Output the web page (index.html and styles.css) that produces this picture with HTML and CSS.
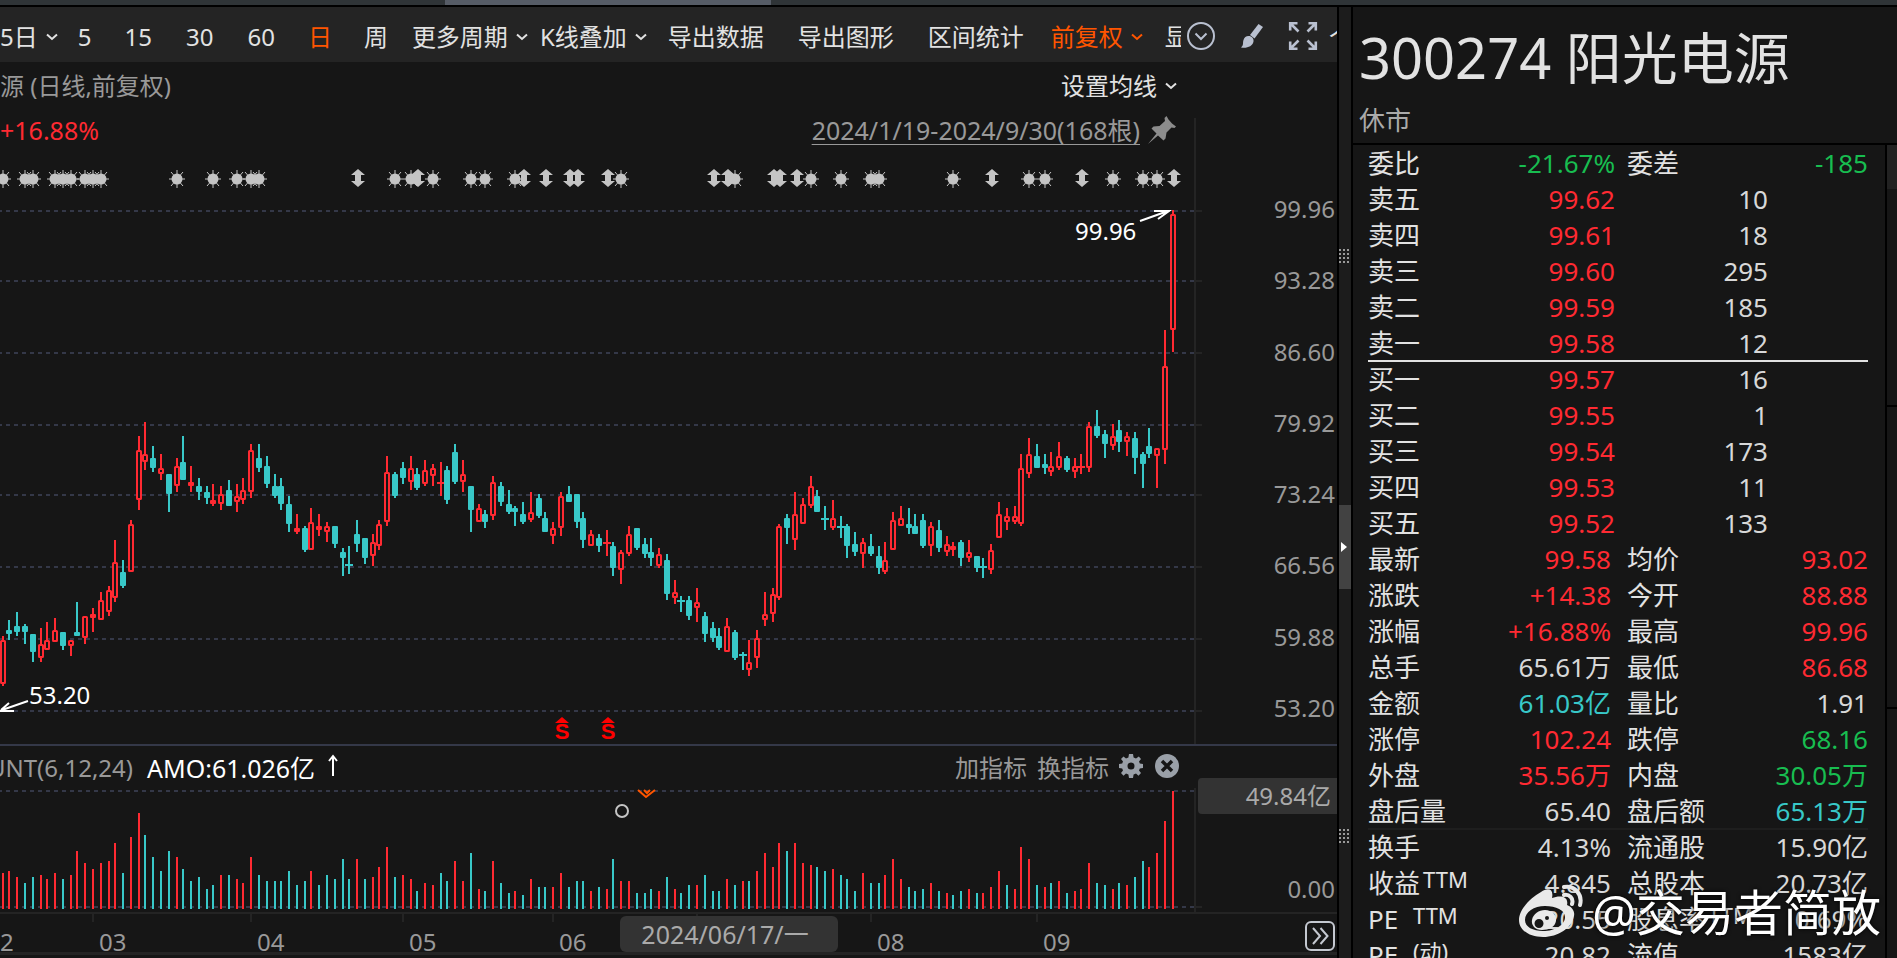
FILE: index.html
```html
<!DOCTYPE html>
<html lang="zh-CN">
<head>
<meta charset="utf-8">
<title>300274 阳光电源</title>
<link rel="stylesheet" href="styles.css">
</head>
<body>
<svg class="defs" aria-hidden="true">
  <symbol id="chev" viewBox="0 0 12 8"><path d="M1 1.5 6 6 11 1.5" fill="none" stroke="currentColor" stroke-width="2"/></symbol>
  <symbol id="grip" viewBox="0 0 10 16"><path d="M1 0V16M5 0V16M9 0V16" fill="none" stroke="#9a9a9a" stroke-width="2" stroke-dasharray="2 2"/></symbol>
</svg>
<div class="app">
  <div class="topstrip"><div class="thumb"></div></div>
  <div class="main">
    <section class="pane">
      <nav class="toolbar">
        <button class="tb first">5日<svg class="chev"><use href="#chev"/></svg></button>
        <button class="tb">5</button>
        <button class="tb wide">15</button>
        <button class="tb wide">30</button>
        <button class="tb wide">60</button>
        <button class="tb on">日</button>
        <button class="tb">周</button>
        <button class="tb drop">更多周期<svg class="chev"><use href="#chev"/></svg></button>
        <button class="tb drop">K线叠加<svg class="chev"><use href="#chev"/></svg></button>
        <button class="tb wide">导出数据</button>
        <button class="tb wide">导出图形</button>
        <button class="tb wide">区间统计</button>
        <button class="tb drop on">前复权<svg class="chev"><use href="#chev"/></svg></button>
        <button class="tb cut">显</button>
        <div class="tools">
          <button class="ico" aria-label="更多"><svg width="30" height="30" viewBox="0 0 30 30"><circle cx="15" cy="15" r="13" fill="none" stroke="#b9c0d0" stroke-width="2"/><path d="M9.500 12.500 15 18 20.500 12.500" fill="none" stroke="#b9c0d0" stroke-width="2"/></svg></button>
          <button class="ico" aria-label="画笔"><svg width="24" height="26" viewBox="0 0 24 26"><path d="M18.500 1 23 4 14.500 15.500 10 12Z" fill="#b9c0d0"/><path d="M8.500 13C12 13 14 15.500 13.500 18.500 12.500 23.500 7 25.500 1 24.500 4 22 2.500 20 3.500 17 4.300 14.500 6 13 8.500 13Z" fill="#b9c0d0"/></svg></button>
          <button class="ico" aria-label="全屏"><svg width="30" height="30" viewBox="0 0 30 30"><path d="M10.500 10.500 3 3M2.200 9.500V2.200H9.500M19.500 10.500 27 3M27.800 9.500V2.200H20.500M10.500 19.500 3 27M2.200 20.500V27.800H9.500M19.500 19.500 27 27M27.800 20.500V27.800H20.500" fill="none" stroke="#b9c0d0" stroke-width="2.600"/></svg></button>
        </div>
        <button class="tb tail">个</button>
      </nav>
      <div class="titlebar">
        <span class="muted">源 (日线,前复权)</span>
        <button class="avg">设置均线<svg class="chev"><use href="#chev"/></svg></button>
      </div>
      <div class="info">
        <span class="up">+16.88%</span>
        <a class="range" href="#">2024/1/19-2024/9/30(168根)</a>
        <svg class="pin" width="28" height="28" viewBox="0 0 28 28"><path d="M18.500 0 20.500 3.500 24 7.500 28 10.500 26.500 12 23.500 11.500 18.500 16.500 17.500 22.500 15.500 24.500 10 19.500 0 28 8.500 17.500 3.500 12.500 5.500 10.500 11.500 10 17 5 16.500 2Z" fill="#8c8c8c"/></svg>
        <div class="axis-gap"></div>
      </div>
      <div class="plot">
        <svg id="price" class="canvas" viewBox="0 142 1194 602" preserveAspectRatio="xMaxYMin slice"></svg>
        <div class="axis price-axis">
          <span>99.96</span><span>93.28</span><span>86.60</span><span>79.92</span><span>73.24</span><span>66.56</span><span>59.88</span><span>53.20</span>
        </div>
      </div>
      <div class="subhead">
        <div class="indicator"><span class="muted">UNT(6,12,24)</span></div>
        <span class="amo">AMO:61.026亿</span>
        <svg class="arrow-up" width="12" height="24" viewBox="0 0 12 24"><path d="M6 22V3M2 7 6 2 10 7" fill="none" stroke="#fff" stroke-width="2"/></svg>
        <div class="subtools">
          <button class="link">加指标</button>
          <button class="link">换指标</button>
          <button class="ico" aria-label="设置"><svg width="24" height="24" viewBox="0 0 24 24"><path fill="#9aa0a8" fill-rule="evenodd" d="M10 0H14L14.600 3.400 17 4.400 19.800 2.400 22 5 20 7.500 20.800 9.600 24 10V14L20.800 14.400 20 16.500 22 19 19.500 21.800 17 19.600 14.600 20.600 14 24H10L9.400 20.600 7 19.600 4.500 21.800 2 19 4 16.500 3.200 14.400 0 14V10L3.200 9.600 4 7.500 2 5 4.500 2.400 7 4.400 9.400 3.400ZM12 8.500A3.500 3.500 0 1 0 12 15.500 3.500 3.500 0 1 0 12 8.500Z"/></svg></button>
          <button class="ico" aria-label="关闭"><svg width="24" height="24" viewBox="0 0 24 24"><circle cx="12" cy="12" r="12" fill="#9aa0a8"/><path d="M7 7 17 17M17 7 7 17" stroke="#161616" stroke-width="3.500"/></svg></button>
        </div>
      </div>
      <div class="plot">
        <svg id="volume" class="canvas" viewBox="0 788 1194 124" preserveAspectRatio="xMaxYMin slice"></svg>
        <div class="axis volume-axis"><span class="cursor-value">49.84亿</span><span class="zero">0.00</span></div>
      </div>
      <div class="dates">
        <svg id="ticks" class="ticks" viewBox="0 912 1337 8" preserveAspectRatio="xMinYMin slice"></svg>
        <span>2</span><span>03</span><span>04</span><span>05</span><span>06</span><span>08</span><span>09</span>
        <div class="cursor-date">2024/06/17/一</div>
        <button class="more" aria-label="展开"><svg width="30" height="30" viewBox="0 0 30 30"><rect x="1" y="1" width="28" height="28" rx="5" fill="none" stroke="#c4c8d0" stroke-width="2"/><path d="M8 7 15 15 8 23M15.500 7 22.500 15 15.500 23" fill="none" stroke="#c4c8d0" stroke-width="2"/></svg></button>
      </div>
    </section>
    <div class="splitter">
      <svg class="grip g1"><use href="#grip"/></svg>
      <button class="handle" aria-label="收起"><svg width="6" height="10" viewBox="0 0 6 10"><path d="M0 0 6 5 0 10Z" fill="#fff"/></svg></button>
      <svg class="grip g2"><use href="#grip"/></svg>
    </div>
    <aside class="quote">
      <header class="stock">
        <h1>300274 阳光电源</h1>
        <p>休市</p>
      </header>
      <div class="body">
        <div class="tables">
          <table class="book">
            <tr><th>委比</th><td class="dn">-21.67%</td><th>委差</th><td class="dn end">-185</td></tr>
            <tr><th>卖五</th><td class="up">99.62</td><td colspan="2" class="qty">10</td></tr>
            <tr><th>卖四</th><td class="up">99.61</td><td colspan="2" class="qty">18</td></tr>
            <tr><th>卖三</th><td class="up">99.60</td><td colspan="2" class="qty">295</td></tr>
            <tr><th>卖二</th><td class="up">99.59</td><td colspan="2" class="qty">185</td></tr>
            <tr class="rule"><th>卖一</th><td class="up">99.58</td><td colspan="2" class="qty">12</td></tr>
            <tr><th>买一</th><td class="up">99.57</td><td colspan="2" class="qty">16</td></tr>
            <tr><th>买二</th><td class="up">99.55</td><td colspan="2" class="qty">1</td></tr>
            <tr><th>买三</th><td class="up">99.54</td><td colspan="2" class="qty">173</td></tr>
            <tr><th>买四</th><td class="up">99.53</td><td colspan="2" class="qty">11</td></tr>
            <tr><th>买五</th><td class="up">99.52</td><td colspan="2" class="qty">133</td></tr>
          </table>
          <table class="book stats">
            <tr><th>最新</th><td class="up">99.58</td><th>均价</th><td class="up end">93.02</td></tr>
            <tr><th>涨跌</th><td class="up">+14.38</td><th>今开</th><td class="up end">88.88</td></tr>
            <tr><th>涨幅</th><td class="up">+16.88%</td><th>最高</th><td class="up end">99.96</td></tr>
            <tr><th>总手</th><td>65.61万</td><th>最低</th><td class="up end">86.68</td></tr>
            <tr><th>金额</th><td class="cy">61.03亿</td><th>量比</th><td class="end">1.91</td></tr>
            <tr><th>涨停</th><td class="up">102.24</td><th>跌停</th><td class="dn end">68.16</td></tr>
            <tr><th>外盘</th><td class="up">35.56万</td><th>内盘</th><td class="dn end">30.05万</td></tr>
            <tr class="faint"><th>盘后量</th><td>65.40</td><th>盘后额</th><td class="cy end">65.13万</td></tr>
            <tr><th>换手</th><td>4.13%</td><th>流通股</th><td class="end">15.90亿</td></tr>
            <tr><th>收益<span class="sup">TTM</span></th><td>4.845</td><th>总股本</th><td class="end">20.73亿</td></tr>
            <tr><th>PE <span class="sup gap">TTM</span></th><td>20.55</td><th>股息率<span class="sup">TTM</span></th><td class="end">0.69%</td></tr>
            <tr><th>PE <span class="sup gap">(动)</span></th><td>20.82</td><th>流值</th><td class="end">1583亿</td></tr>
          </table>
        </div>
        <div class="edge"><div class="e1"></div><div class="e2"></div><div class="e3"></div></div>
      </div>
      <div class="watermark">
        <svg width="66" height="54" viewBox="0 0 66 54"><path fill="#e9e9e9" fill-rule="evenodd" d="M23 8C30 3 36 5 34 14 42 11 51 12 49 21 54 23 57 27 56 32 54 44 40 53 25 53 11 53 1 46 1 36 1 26 12 14 23 8ZM27 22C16 22 7 28 7 36 7 43 15 47 25 47 37 47 47 41 47 33 47 26 38 22 27 22Z"/><path fill="#e9e9e9" fill-rule="evenodd" d="M27 26C34 26 39 31 38 37 37 43 31 46 24 46 17 46 13 41 14 36 15 30 21 26 27 26ZM21 35A4.500 4.500 0 1 0 21 44 4.500 4.500 0 1 0 21 35ZM29 32A2 2 0 1 0 29 36 2 2 0 1 0 29 32Z"/><path d="M46 3C56 1 65 10 62 21M46 11C51 10 56 14 54 20" fill="none" stroke="#e9e9e9" stroke-width="4" stroke-linecap="round"/></svg>
        <span>@交易者简放</span>
      </div>
    </aside>
  </div>
</div>
<script src="chart.js"></script>
</body>
</html>
```

FILE: styles.css
```css
* { box-sizing: border-box; }
body { margin: 0; background: #161616; color: #e2e2e2; font: 24px/32px "Noto Sans", "Noto Sans CJK SC", sans-serif; }
button { background: none; border: 0; padding: 0; margin: 0; font: inherit; color: inherit; white-space: nowrap; cursor: pointer; }
.defs { position: absolute; width: 0; height: 0; }
.app { height: 100vh; overflow: hidden; display: flex; flex-direction: column; }
.topstrip { height: 7px; flex: none; background: #2f3437; border-bottom: 2px solid #000; padding-left: 445px; }
.thumb { width: 326px; height: 5px; background: #565c66; }
.main { flex: 1; min-height: 0; display: flex; }
.pane { flex: 1; min-width: 0; overflow: hidden; display: flex; flex-direction: column; }
.muted { color: #999; }
.up { color: #ff2a32; }
.dn { color: #18bd50; }
.cy { color: #38c8c8; }

.toolbar { height: 55px; flex: none; background: #242424; display: flex; align-items: center; overflow: hidden; padding-top: 4px; }
.tb { padding: 0 16px; flex: none; display: flex; align-items: center; gap: 8px; }
.tb.first { padding: 0 4px 0 0; }
.tb.drop { padding: 0 4px 0 8px; }
.tb.wide { padding: 0 17px; }
.tb.drop.on { padding-left: 10px; }
.tb.on { color: #ff5500; }
.tb.cut { width: 34px; padding: 0 0 0 18px; overflow: hidden; }
.tb.tail { margin-left: 11px; padding: 0; width: 8px; overflow: hidden; }
.chev { width: 12px; height: 8px; flex: none; }
.tools { margin-left: auto; padding-bottom: 2px; display: flex; align-items: center; gap: 24px; }
.ico { display: flex; }

.titlebar { height: 56px; flex: none; padding: 8px 160px 0 0; display: flex; justify-content: space-between; align-items: flex-start; }
.avg { display: flex; align-items: center; gap: 8px; }
.info { height: 24px; flex: none; line-height: 24px; font-size: 25px; display: flex; align-items: center; }
.range { margin-left: auto; margin-right: 8px; color: #999; text-decoration: underline; text-underline-offset: 4px; text-decoration-thickness: 1px; }
.pin { margin-right: 18px; }
.axis-gap { width: 143px; height: 24px; border-left: 2px solid #242424; }
.plot { display: flex; flex: none; }
.canvas { flex: 1; min-width: 0; overflow: visible; position: relative; }
#price { height: 602px; }
#volume { height: 124px; }
.axis { width: 143px; flex: none; border-left: 2px solid #242424; color: #999; text-align: right; display: flex; flex-direction: column; }
.price-axis { padding: 51px 2px 20px 0; justify-content: space-between; }
.chart-text { fill: #fff; font-size: 24px; }
.sell { fill: #f00; font: bold 22px "Liberation Sans", sans-serif; }

.subhead { height: 44px; flex: none; border-top: 2px solid #343848; display: flex; align-items: center; padding: 2px 158px 0 0; }
.indicator { width: 133px; display: flex; justify-content: flex-end; overflow: hidden; margin-right: 14px; white-space: nowrap; }
.amo { color: #fff; font-size: 25px; }
.arrow-up { margin: 0 0 4px 12px; }
.subtools { margin-left: auto; display: flex; align-items: center; gap: 10px; color: #999; }
.subtools .ico { margin: 0 0 4px 2px; }
.subtools .ico:nth-child(3) { margin-left: 0; }
.cursor-value { background: #333; color: #aaa; border-radius: 4px 0 0 4px; height: 36px; line-height: 36px; padding-right: 6px; margin: -10px 0 0 2px; }
.zero { padding-right: 2px; margin-top: 59px; }

.dates { height: 43px; flex: none; position: relative; border-top: 2px solid #242424; border-bottom: 3px solid #242424; color: #999; display: grid; grid-template-columns: 99px 158px 152px 150px 318px 166px 1fr; align-items: center; padding-top: 16px; }
.dates span { line-height: 24px; }
.ticks { position: absolute; left: 0; top: 0; width: 100%; height: 8px; overflow: visible; }
.cursor-date { position: absolute; left: 620px; top: 2px; width: 218px; height: 36px; line-height: 36px; font-size: 25px; text-align: center; background: #333; color: #aaa; border-radius: 6px; padding-right: 8px; }
.more { position: absolute; right: 2px; top: 7px; display: flex; }

.splitter { width: 16px; flex: none; background: #1c1c1c; border-left: 2px solid #000; border-right: 2px solid #000; display: flex; flex-direction: column; }
.grip { width: 10px; height: 16px; margin-top: 242px; flex: none; }
.handle { height: 84px; margin-top: 240px; background: #424242; display: flex; align-items: center; padding-left: 2px; flex: none; }
.grip.g2 { margin-top: 240px; }

.quote { width: 544px; flex: none; position: relative; display: flex; flex-direction: column; }
.stock { height: 138px; flex: none; border-bottom: 2px solid #000; padding: 10px 0 0 6px; }
.stock h1 { margin: 0; font-size: 56px; line-height: 80px; font-weight: 400; white-space: nowrap; }
.stock p { margin: 6px 0 0; font-size: 26px; line-height: 34px; color: #aaa; }
.body { flex: 1; min-height: 0; display: flex; }
.tables { flex: 1; padding: 1px 17px 0 15px; overflow: hidden; }
.book { width: 100%; table-layout: fixed; border-collapse: collapse; font-size: 26px; color: #d8d8d8; }
.book tr { height: 36px; }
.book th, .book td { padding: 0 0 2px; height: 36px; line-height: 34px; white-space: nowrap; font-weight: 400; text-align: right; }
.book th { text-align: left; width: 105px; color: #e2e2e2; }
.book tr > td:nth-child(2) { width: 142px; }
.book td + th { padding-left: 12px; width: 120px; }
.book .qty { padding-right: 100px; }
.book.stats td:nth-child(2) { padding-right: 4px; }
.rule { background: linear-gradient(#e2e2e2, #e2e2e2) bottom / 100% 2px no-repeat; }
.faint { background: linear-gradient(#1e1e1e, #1e1e1e) bottom / 100% 2px no-repeat; }
.sup { display: inline-block; font-size: 22px; line-height: 24px; vertical-align: 5px; margin-left: 3px; }
.sup.gap { margin-left: 8px; }
.edge { width: 12px; border-left: 2px solid #000; display: flex; flex-direction: column; }
.e1 { height: 44px; background: #222; }
.e2 { height: 218px; border-bottom: 2px solid #000; }
.e3 { height: 302px; border-bottom: 2px solid #000; }
.watermark { position: absolute; right: 16px; bottom: 16px; height: 60px; display: flex; align-items: center; gap: 8px; color: #fff; font-size: 49px; line-height: 60px; white-space: nowrap; text-shadow: 0 0 4px #000; }
.watermark svg { margin-bottom: 2px; }
```

FILE: chart.js
```js
// x, candle colour, high, body top, body bottom, low (2px rows below y=400), bar colour, bar height (2px rows)
const DATA = `
3 r 118 120 142 143 r 18|9 t 110 115 117 120 r 19|17 t 106 113 116 118 r 16|25 t 112 113 116 122 t 13|33 t 117 117 126 131 t 16
41 r 114 122 129 131 r 17|47 r 111 120 125 125 r 15|55 r 109 115 121 121 r 18|63 t 116 116 123 125 t 15|71 r 120 120 123 128 r 17
77 t 101 116 118 118 r 29|85 r 108 108 119 122 r 23|93 r 104 107 109 116 r 20|101 r 96 100 110 110 r 23|109 r 93 95 106 108 r 24
115 r 70 81 99 101 r 33|123 t 80 86 93 94 t 18|131 r 60 62 86 86 r 36|139 r 18 25 50 55 r 48|145 r 11 27 31 35 t 37
153 t 23 29 34 36 t 26|161 r 27 34 37 40 t 19|169 t 37 37 47 56 t 29|177 r 29 33 43 46 r 26|183 t 18 31 40 40 t 20
191 r 33 41 43 46 t 14|199 t 39 43 46 50 t 16|207 t 43 46 49 52 t 10|213 r 42 50 52 53 t 12|221 r 43 47 52 55 r 17
229 t 40 45 53 53 t 17|237 r 42 48 51 56 r 15|243 r 39 45 50 52 r 13|251 r 22 25 46 49 r 26|259 t 22 29 34 36 t 17
267 t 28 33 42 44 t 14|275 t 37 43 48 49 t 14|281 t 39 43 52 55 t 14|289 t 48 52 62 66 t 19|297 r 57 64 66 67 t 12
305 t 63 64 75 76 t 14|311 r 54 61 75 75 r 19|319 r 57 63 65 68 t 12|327 r 61 63 66 71 t 17|335 t 63 63 72 74 t 15
343 t 74 76 79 88 t 25|349 t 73 82 83 87 t 15|357 t 60 67 72 76 r 25|365 t 69 69 79 82 t 15|373 r 67 71 78 83 r 16
379 r 60 62 73 75 r 21|387 r 28 36 61 63 r 31|395 t 36 37 48 49 t 16|403 t 31 34 39 42 r 17|411 r 28 34 41 45 r 15
417 t 34 37 44 45 t 9|425 r 30 35 42 43 r 13|433 r 32 34 38 43 r 12|441 r 31 41 42 48 t 18|447 t 33 35 50 52 t 14
455 t 22 26 41 42 r 24|463 r 30 37 41 46 r 14|471 t 43 43 55 66 t 28|479 r 52 54 61 61 r 10|485 t 55 57 61 64 t 9
493 r 38 41 58 60 r 24|501 t 41 43 51 53 t 13|509 t 45 52 56 57 t 8|515 t 53 54 56 63 r 9|523 t 51 57 61 62 t 7
531 r 46 56 60 61 r 15|539 t 47 49 58 59 t 11|545 t 56 59 66 66 t 11|553 r 61 64 68 72 r 11|561 r 46 48 64 68 r 18
569 t 43 47 51 51 t 11|577 t 47 47 61 64 t 14|583 t 56 59 70 74 t 14|591 r 65 67 73 73 r 9|599 t 67 69 73 76 t 11
607 r 65 71 72 78 r 10|613 t 71 73 84 88 t 25|621 r 75 76 85 92 r 14|629 r 63 67 77 78 r 14|637 t 64 64 74 75 t 8
645 t 69 72 77 79 t 8|651 t 69 76 79 83 t 10|659 r 74 77 83 84 r 9|667 t 77 80 97 100 t 16|675 r 90 96 99 102 r 10
681 t 98 100 101 106 t 8|689 t 98 100 108 110 t 12|697 r 94 101 104 111 r 12|705 t 106 108 117 121 t 17|713 t 111 114 119 121 t 9
719 t 114 118 124 125 t 9|727 r 109 113 126 126 r 15|735 t 115 116 129 130 t 12|743 t 126 127 128 135 r 14|749 r 120 131 135 138 t 14
757 r 115 119 129 134 r 19|765 r 96 107 110 113 r 28|773 r 94 97 107 111 r 21|779 r 62 63 99 100 r 33|787 t 57 59 64 72 t 29
795 r 46 57 70 75 r 33|803 r 49 52 62 62 r 23|811 r 38 43 53 54 r 22|817 t 45 48 56 56 t 21|825 t 53 59 60 65 t 19
833 r 50 59 64 65 r 20|841 t 58 63 64 69 t 17|847 t 62 63 73 79 t 15|855 t 66 72 76 78 t 9|863 r 69 71 77 84 r 18
871 t 67 73 77 78 t 13|879 t 73 78 84 87 t 13|885 r 71 80 86 87 r 17|893 r 56 60 75 75 r 25|901 r 53 59 63 63 r 15
909 t 54 62 64 67 t 11|915 t 57 63 67 67 t 9|923 t 57 60 73 74 t 10|931 r 61 63 73 78 r 13|939 t 60 65 74 76 t 9
947 r 68 72 76 78 r 8|953 r 71 73 75 78 t 7|961 t 70 71 79 83 t 9|969 r 70 76 79 81 r 10|977 t 78 78 84 86 t 8
983 t 79 83 84 89 r 8|991 r 72 75 85 87 r 11|999 r 51 57 69 69 r 19|1007 r 54 58 61 65 t 12|1015 r 53 58 61 62 r 10
1021 r 27 34 62 63 r 31|1029 r 19 27 37 39 r 25|1037 t 22 28 34 34 t 12|1045 t 27 32 34 37 r 11|1051 r 26 33 36 38 t 13
1059 r 21 28 34 35 r 14|1067 t 28 29 35 36 t 8|1075 r 29 33 36 39 r 9|1081 r 27 33 34 37 r 10|1089 r 11 13 34 36 r 23
1097 t 5 13 18 19 t 13|1105 t 15 17 22 29 t 12|1113 r 12 18 23 25 r 10|1119 t 10 15 21 26 t 13|1127 r 16 18 21 28 r 12
1135 t 16 19 29 37 t 16|1143 t 26 27 32 44 t 24|1149 t 14 23 27 29 r 21|1157 r 24 24 28 44 r 28|1165 r -35 -17 25 32 r 44
1173 r -95 -93 -35 -24 r 59`;

const RED = '#ff2a32', TEAL = '#38c8c8', GRID = '#343848', AXIS = '#242424';
const paint = c => (c === 'r' ? RED : TEAL);
const rect = (x, y, w, h, f) => `<rect x="${x}" y="${y}" width="${w}" height="${h}" fill="${f}"/>`;
const dashed = (y, end) =>
  `<path d="M-2 ${y}H1194" stroke="${GRID}" stroke-width="2" stroke-dasharray="4 4"/>` +
  (end ? rect(1194, y - 1, 8, 2, AXIS) : '');

const rows = DATA.trim().split(/[|\n]/).map(r => r.split(' '));
let price = [211, 281, 353, 425, 495, 567, 639, 711].map(y => dashed(y, true)).join('');
let volume = dashed(791, false) + dashed(907, true);

for (const [xs, c, hi, top, bot, lo, vc, vol] of rows) {
  const x = +xs, f = paint(c), Y = v => 400 + 2 * v;
  const t = Y(top), b = Y(bot), h = b - t;
  if (h <= 2) {
    price += rect(x - 1, Y(hi), 2, Y(lo) - Y(hi), f) + rect(x - 4, t, 8, 2, f);
  } else {
    price += rect(x - 1, Y(hi), 2, t - Y(hi), f) + rect(x - 1, b, 2, Y(lo) - b, f);
    price += c === 'r' && h > 4
      ? `<rect x="${x - 2}" y="${t + 1}" width="4" height="${h - 2}" rx="0.5" fill="#161616" stroke="${f}" stroke-width="2"/>`
      : `<rect x="${x - 3}" y="${t}" width="6" height="${h}" rx="1" fill="${f}"/>`;
  }
  volume += rect(x - 1, 909 - 2 * vol, 2, 2 * vol, paint(vc));
}

const suns = [3, 25, 33, 55, 63, 71, 85, 93, 101, 177, 213, 237, 251, 259, 395, 411, 433, 471, 485, 515, 621, 735, 811, 841, 871, 879, 953, 1029, 1045, 1113, 1143, 1157];
const arrows = [358, 418, 524, 546, 570, 578, 608, 714, 728, 774, 780, 797, 992, 1082, 1174];
for (const x of suns) {
  price += `<g transform="translate(${x} 179)"><circle r="5.500" fill="#c4c4c4"/><path d="M0-9V9M-8 0H8M-6-7 6 7M6-7-6 7" stroke="#c4c4c4" stroke-width="1"/></g>`;
}
for (const x of arrows) {
  price += `<path transform="translate(${x} 178)" d="M0-9 7-3H3V3H7L0 9-7 3H-3V-3H-7Z" fill="#c4c4c4"/>`;
}
price += '<path d="M1140 221 1168 211M1154 211H1169L1158 219" fill="none" stroke="#fff" stroke-width="2"/>';
price += '<text class="chart-text" x="1075" y="240">99.96</text>';
price += '<path d="M28 701 2 710M9 703 1 710M0 711H14" fill="none" stroke="#fff" stroke-width="2"/>';
price += '<text class="chart-text" x="29" y="704">53.20</text>';
for (const x of [562, 608]) {
  price += `<path d="M${x - 7} 723 ${x} 717 ${x + 7} 723Z" fill="#f00"/><text class="sell" x="${x}" y="739" text-anchor="middle">S</text>`;
}
volume += '<circle cx="622" cy="811" r="6" fill="none" stroke="#c4c4c4" stroke-width="2"/>';
volume += '<path d="M638 790 646 797 655 790M644 790 647 793 650 790" fill="none" stroke="#ff5500" stroke-width="2"/>';

document.getElementById('price').innerHTML = price;
document.getElementById('volume').innerHTML = volume;
document.getElementById('ticks').innerHTML = [93, 251, 403, 553, 697, 871, 1037].map(x => rect(x - 1, 912, 2, 8, AXIS)).join('');
```
